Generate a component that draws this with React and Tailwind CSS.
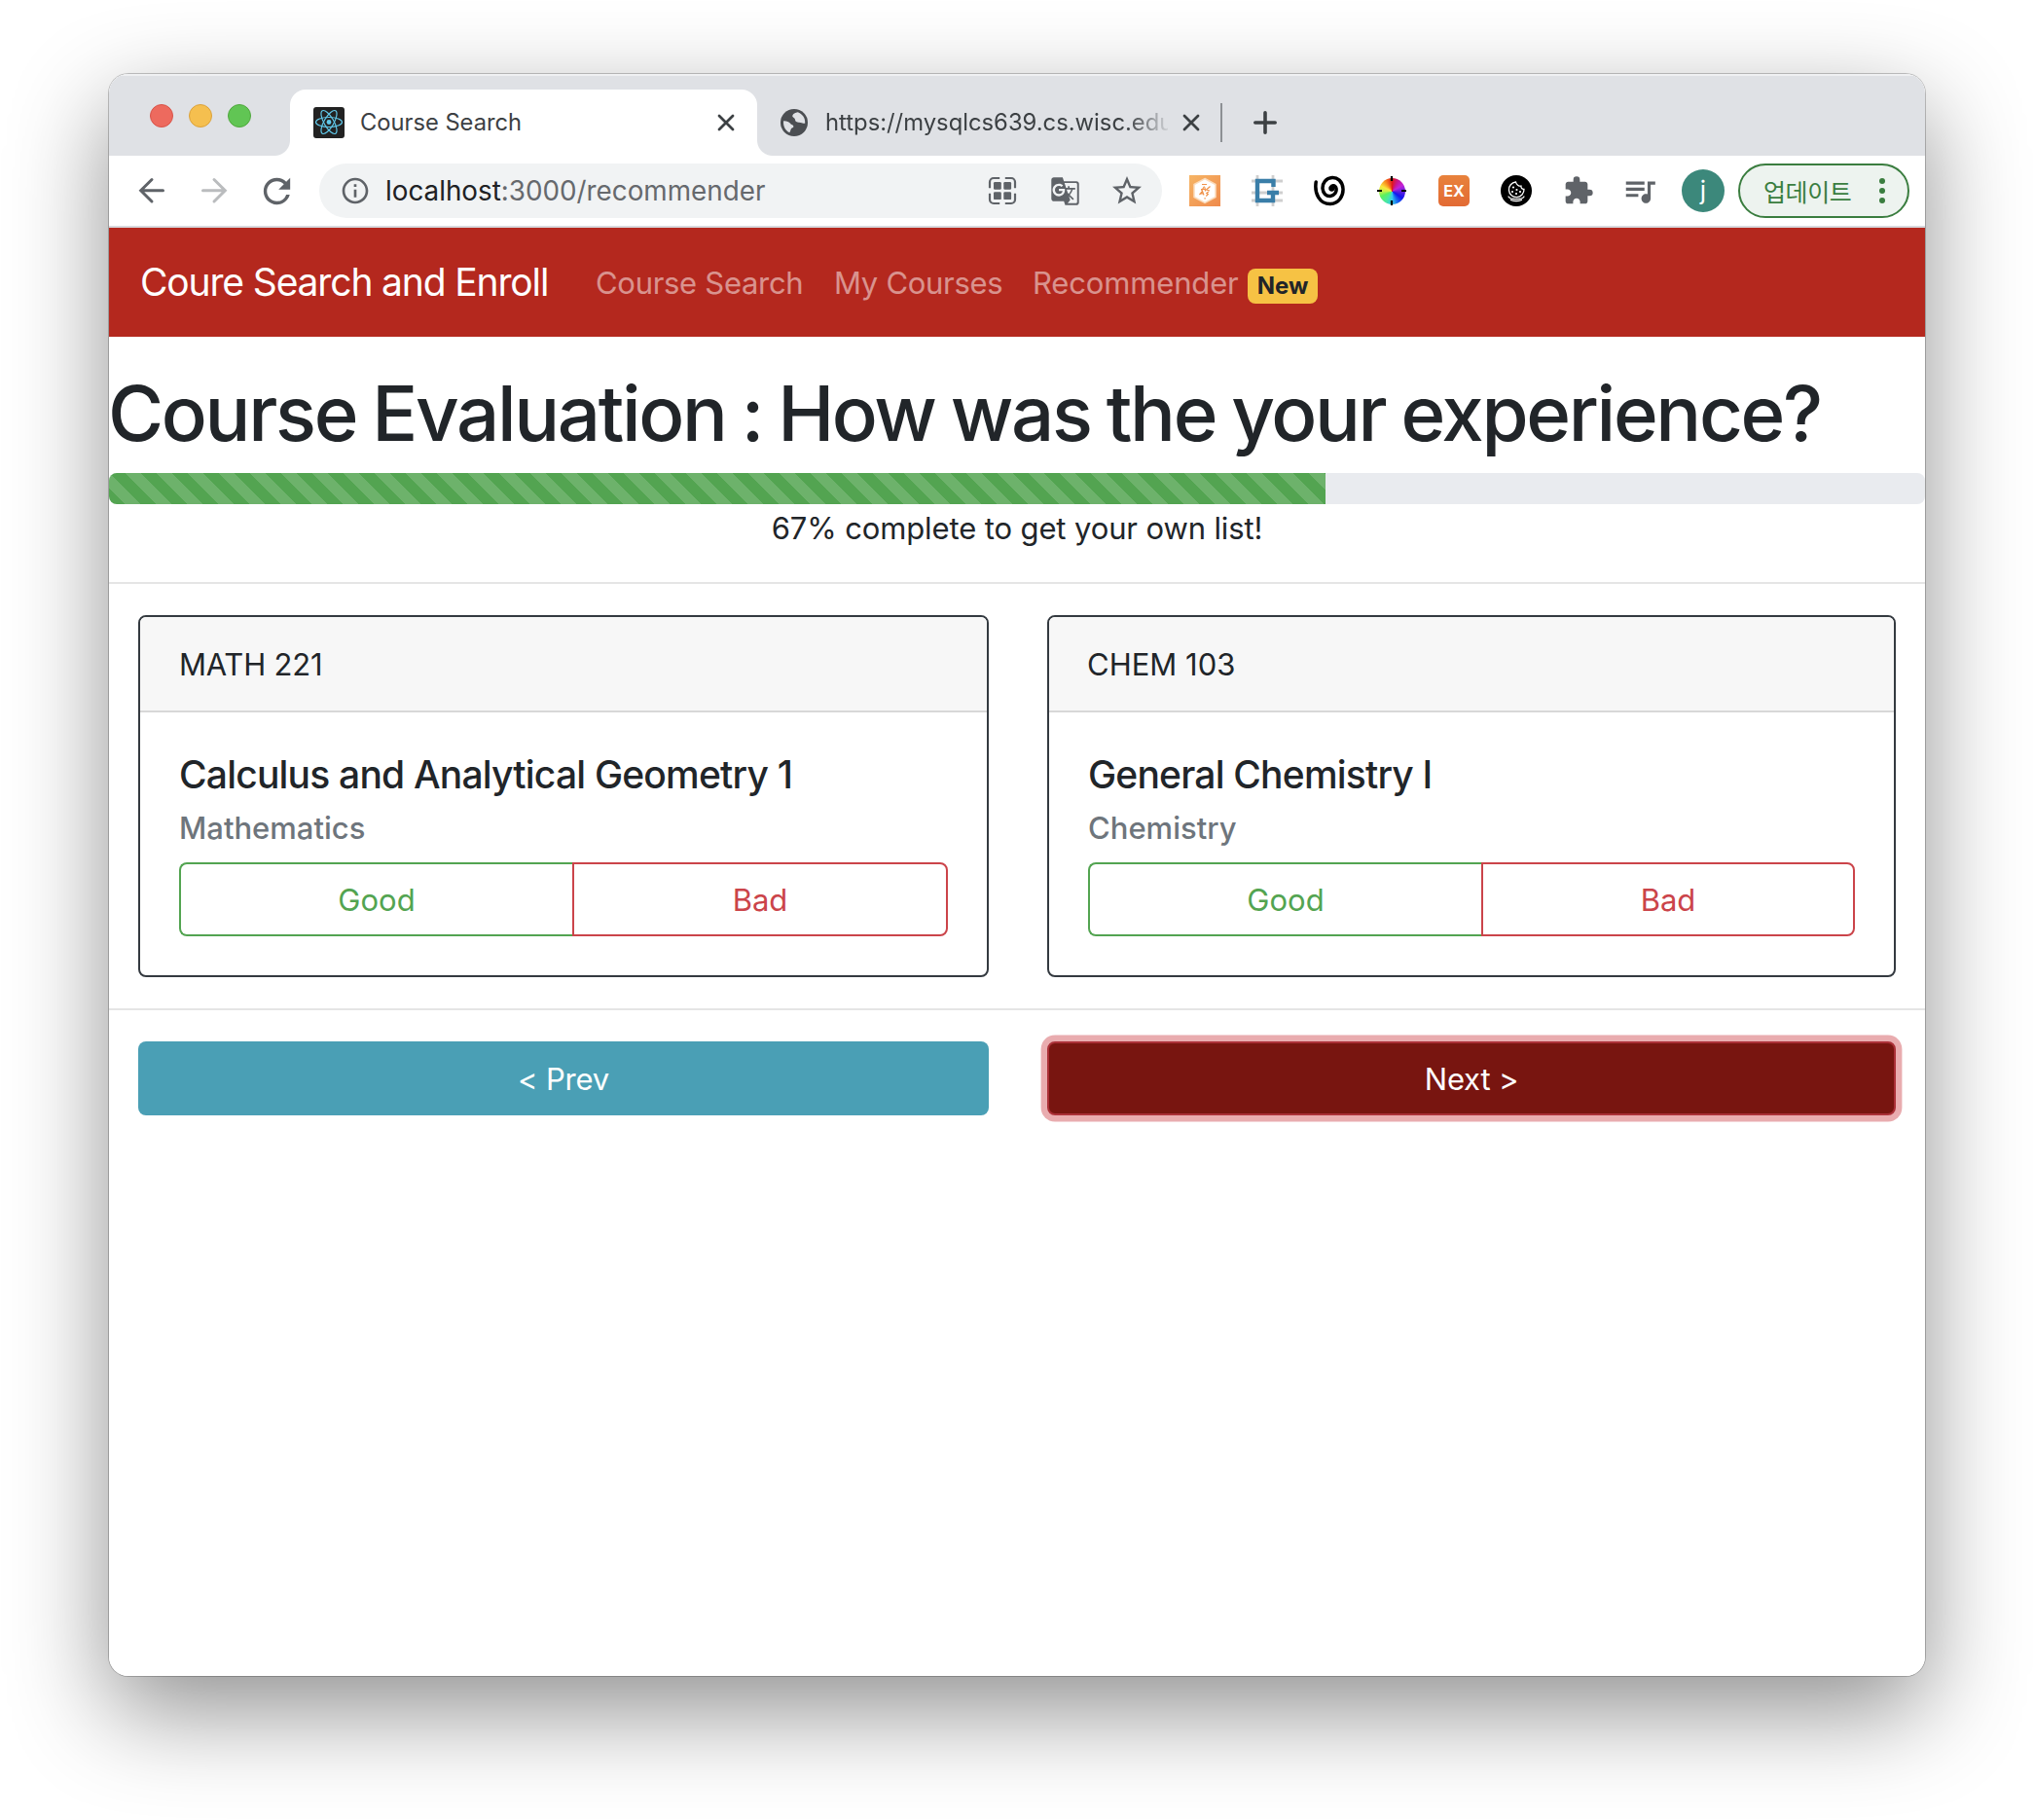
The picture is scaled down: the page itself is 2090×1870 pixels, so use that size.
import React from "react";
import {
  MdExtension,
  MdGTranslate,
  MdInfoOutline,
  MdQueueMusic,
  MdRefresh,
  MdStarBorder,
} from "react-icons/md";

const courses = [
  {
    code: "MATH 221",
    codeStyle: "pl-10 tracking-[-0.2px]",
    title: "Calculus and Analytical Geometry 1",
    subject: "Mathematics",
    box: "ml-[30px] w-[874px]",
    bad: "w-[386px]",
  },
  {
    code: "CHEM 103",
    codeStyle: "pl-[39px] tracking-normal",
    title: "General Chemistry I",
    subject: "Chemistry",
    box: "ml-[60px] w-[872px]",
    bad: "w-[384px]",
  },
];

function ReactLogo() {
  return (
    <svg className="size-8" viewBox="0 0 32 32">
      <rect width="32" height="32" rx="3" fill="#222" />
      <g fill="none" stroke="#61c9ea" strokeWidth="1.2">
        <ellipse cx="16" cy="15.5" rx="13.5" ry="5" />
        <ellipse cx="16" cy="15.5" rx="13.5" ry="5" transform="rotate(60 16 15.5)" />
        <ellipse cx="16" cy="15.5" rx="13.5" ry="5" transform="rotate(120 16 15.5)" />
      </g>
      <circle cx="16" cy="15.5" r="2.4" fill="#61c9ea" />
    </svg>
  );
}

function Globe() {
  return (
    <svg className="size-7" viewBox="0 0 28 28">
      <circle cx="14" cy="14" r="14" fill="#4b4e52" />
      <path
        d="M16.2 2.9 C12.4 4.4 11 6.2 11.4 8 C12.4 9.2 14.4 8.8 14.6 11 C14.8 13 16.8 13.2 18.6 13 C20.4 12.6 22.4 13.4 25.2 13.2 C24.9 7.8 21 3.8 16.2 2.9 Z M3 13.8 C6 13.2 8.6 13.8 10.2 15.4 C11.2 16.8 13.8 16.2 14 18.2 C13.8 19.6 11.6 19.6 11.6 21.4 C11.6 23 10.8 24 10.9 24.8 C6.2 23.5 3 19 3 13.8 Z"
        fill="#dfe1e5"
        transform="rotate(8 14 14)"
      />
    </svg>
  );
}

function CloseIcon() {
  return (
    <svg className="size-6" viewBox="0 0 24 24" stroke="#3c4043" strokeWidth="2.8" strokeLinecap="round">
      <path d="M5 5 19 19M19 5 5 19" />
    </svg>
  );
}

function QrIcon() {
  return (
    <svg className="size-10" viewBox="0 0 40 40" fill="none" stroke="#5f6368" strokeWidth="2.2">
      <path d="M17.2 7H11A4 4 0 0 0 7 11V17.2M22.8 7h6.2a4 4 0 0 1 4 4V17.2M17.2 33H11a4 4 0 0 1-4-4V22.8M22.8 33h6.2a4 4 0 0 0 4-4V22.8" />
      <g fill="#5f6368" stroke="none">
        <rect x="11" y="11" width="7.8" height="7.8" rx="1.2" />
        <rect x="21.3" y="11" width="7.8" height="7.8" rx="1.2" />
        <rect x="11" y="21.3" width="7.8" height="7.8" rx="1.2" />
        <rect x="21.3" y="21.3" width="7.8" height="7.8" rx="1.2" />
      </g>
    </svg>
  );
}

function HexExtension() {
  return (
    <svg className="size-8" viewBox="0 0 32 32">
      <defs>
        <linearGradient id="hexFill" x1="0" y1="0" x2="1" y2="1">
          <stop offset="0" stopColor="#f6b565" />
          <stop offset="1" stopColor="#ef8a4c" />
        </linearGradient>
      </defs>
      <rect width="32" height="32" fill="url(#hexFill)" />
      <path d="M16 3.5 27 9.5V22.5L16 28.5 5 22.5V9.5Z" fill="#fff" stroke="#fbdcbc" strokeWidth="1.5" />
      <path
        d="M13 9.5h5M15.5 11.5l-3 4.5M12 14.5l4.5 0M21.5 11.5l-4 3.5 3.5 1M16 12.5l.5 4M10.5 20l3-3.5 1.5 4M11.5 18.8h3M19.8 17l-2 1.5 1.5 1-2 2M15.4 23.8h1.4"
        fill="none"
        stroke="#f0924a"
        strokeWidth="1.2"
      />
    </svg>
  );
}

function GridExtension() {
  return (
    <svg className="size-8" viewBox="0 0 32 32" fill="none">
      <path d="M6 0V32M22 0V32M0 6H32M0 26H32M0 18H32" stroke="#cfcfcf" strokeWidth="2.8" />
      <path d="M22.5 12V6H6V26H22V18M16 18H28" stroke="#3a7ea8" strokeWidth="4.4" />
    </svg>
  );
}

function SpiralExtension() {
  return (
    <svg className="size-8" viewBox="0 0 32 32" fill="none" stroke="#000" strokeWidth="3.5" strokeLinecap="round">
      <path d="M2.2 7C0.4 19 6 29.8 17 29.6C26 29 30.4 21 30 14C29.5 6 24 2.2 19 2.4C12.4 2.8 8.8 8 9 13.6C9.4 19 13 21.8 17 21.4C21.6 20.8 23.6 17 23 13.6C22.2 10.4 18.6 9.6 17.6 12.4" />
      <circle cx="18.4" cy="13.6" r="1.4" fill="#000" />
    </svg>
  );
}

function WheelExtension() {
  return (
    <div className="grid size-8 place-items-center">
      <div className="relative size-[27px] rounded-full bg-[conic-gradient(#e0181c,#c81690_30deg,#c322d8_60deg,#5a1fe0_95deg,#1414ee_125deg,#1760f0_150deg,#35c8ee_180deg,#48e8a0_210deg,#5cf05c_245deg,#c8f048_270deg,#fbe63c_295deg,#f88a1e_325deg,#e0181c)]">
        <svg className="absolute -left-[2.5px] -top-[2.5px] size-8" viewBox="0 0 32 32" stroke="#000" strokeWidth="2.2">
          <path d="M16 1v5M16 26v5M1 16h5M26 16h5" />
        </svg>
      </div>
    </div>
  );
}

function CookieExtension() {
  return (
    <svg className="size-8" viewBox="0 0 32 32">
      <circle cx="16" cy="16" r="16" fill="#000" />
      <g fill="none" stroke="#fff" strokeWidth="1.3" strokeLinecap="round">
        <path d="M15.5 7A7.8 7.8 0 1 0 24 14.4C22 14.6 20.6 13 21 11.2C18.6 11.4 16 9.6 15.5 7Z" />
        <path d="M8 22C9 24 12 24.6 16 24.6S23 24 24 22M10.5 25.5C14 27 18 27 21.5 25.5" />
      </g>
      <g fill="#fff">
        <circle cx="13" cy="12.5" r="1.1" />
        <circle cx="12" cy="17" r="1.1" />
        <circle cx="16.5" cy="15" r="1.1" />
        <circle cx="16" cy="19" r="1.1" />
        <circle cx="20" cy="17" r="1.1" />
      </g>
    </svg>
  );
}

function TabStrip() {
  return (
    <div className="flex h-[84px] items-end bg-[#dfe1e5] shadow-[inset_0_2px_0_#eff0f2]">
      <div className="flex h-full items-center gap-4 pl-[42px] pt-0.5">
        <span className="size-6 rounded-full border border-[#d8544a] bg-[#ed6a5e]" />
        <span className="size-6 rounded-full border border-[#dba23c] bg-[#f5bf4f]" />
        <span className="size-6 rounded-full border border-[#51a73e] bg-[#61c554]" />
      </div>
      <div className="relative ml-10 flex h-[68px] w-[480px] items-center rounded-t-[16px] bg-white pl-6 pr-5">
        <span className="absolute -left-4 bottom-0 size-4 bg-[radial-gradient(circle_at_0_0,transparent_15.5px,white_16.5px)]" />
        <span className="absolute -right-4 bottom-0 size-4 bg-[radial-gradient(circle_at_100%_0,transparent_15.5px,white_16.5px)]" />
        <ReactLogo />
        <span className="ml-4 flex-1 text-[23.7px] leading-8 text-[#3c4043]">Course Search</span>
        <CloseIcon />
      </div>
      <div className="flex h-[68px] items-center">
        <div className="ml-6">
          <Globe />
        </div>
        <span className="ml-[18px] w-[352px] overflow-hidden whitespace-nowrap text-[23.8px] leading-8 text-[#3c4043] [mask-image:linear-gradient(to_right,black_310px,transparent_356px)]">
          https://mysqlcs639.cs.wisc.edu
        </span>
        <div className="ml-3">
          <CloseIcon />
        </div>
        <span className="ml-[18px] h-10 w-0.5 bg-[#8d9094]" />
        <svg className="ml-[30px] size-7" viewBox="0 0 28 28" stroke="#3c4043" strokeWidth="3.6" strokeLinecap="round">
          <path d="M14 3.8v20.4M3.8 14h20.4" />
        </svg>
      </div>
    </div>
  );
}

function Toolbar() {
  return (
    <div className="flex h-[74px] items-center border-b-2 border-[#d8dade] bg-white pl-6 text-[#5f6368]">
      <div className="flex gap-6">
        <svg className="size-10" viewBox="0 0 40 40" fill="none" stroke="#5f6368" strokeWidth="3" strokeLinecap="round">
          <path d="M31.5 19.8H9M20 8.5 8.7 19.8 20 31" />
        </svg>
        <svg className="size-10" viewBox="0 0 40 40" fill="none" stroke="#babcbe" strokeWidth="3" strokeLinecap="round">
          <path d="M8.5 19.8H31M20 8.5 31.3 19.8 20 31" />
        </svg>
        <MdRefresh className="size-[41px]" />
      </div>
      <div className="ml-[23px] flex h-14 w-[866px] items-center rounded-full bg-[#f1f3f4] pl-[21px] pr-4">
        <MdInfoOutline className="size-8" />
        <span className="ml-[15px] flex-1 text-[27.8px] leading-9 text-[#66696d]">
          <span className="text-[#202124]">localhost</span>:3000/recommender
        </span>
        <div className="flex items-center gap-6">
          <QrIcon />
          <div className="grid size-10 place-items-center">
            <MdGTranslate className="size-[31px]" />
          </div>
          <div className="grid size-10 place-items-center">
            <MdStarBorder className="size-9" />
          </div>
        </div>
      </div>
      <div className="ml-7 flex items-center gap-8">
        <HexExtension />
        <GridExtension />
        <SpiralExtension />
        <WheelExtension />
        <span className="grid size-8 place-items-center rounded-[5px] bg-linear-to-b from-[#e8823c] to-[#e26a34] text-[16px] leading-none font-bold text-white">
          EX
        </span>
        <CookieExtension />
        <MdExtension className="size-8" />
        <MdQueueMusic className="-mr-0.5 -ml-1 size-[38px]" />
      </div>
      <span className="ml-[26px] grid size-11 place-items-center rounded-full bg-[#3c887b] text-[26px] leading-none text-white">
        j
      </span>
      <div className="ml-[14px] flex h-14 w-44 items-center rounded-full border-2 border-[#3a7d3f] bg-[#edf3ef] pl-6">
        <span className="w-[92px] font-['Noto_Sans_CJK_KR',sans-serif] text-[25px] leading-8 tracking-[-0.4px] whitespace-nowrap text-[#3a7d3f]">
          업데이트
        </span>
        <span className="ml-[27px] flex flex-col gap-1">
          <i className="size-1.5 rounded-full bg-[#3a7d3f]" />
          <i className="size-1.5 rounded-full bg-[#3a7d3f]" />
          <i className="size-1.5 rounded-full bg-[#3a7d3f]" />
        </span>
      </div>
    </div>
  );
}

function Navbar() {
  return (
    <nav className="flex h-28 items-center bg-[#b4281e] pl-8">
      <span className="w-[420px] text-[39px] leading-[60px] tracking-[-1.15px] whitespace-nowrap text-white">
        Coure Search and Enroll
      </span>
      <div className="ml-12 flex items-center pt-px text-[31px] leading-[48px] tracking-[-0.3px] whitespace-nowrap text-white/50">
        <span className="w-[245px]">Course Search</span>
        <span className="w-[204px]">My Courses</span>
        <span className="w-[221px] tracking-[-0.15px]">Recommender</span>
        <span className="mt-[7px] grid h-9 w-[72px] place-items-center rounded-lg bg-[#f6c244] text-[24px] leading-none font-bold tracking-normal text-[#212529]">
          New
        </span>
      </div>
    </nav>
  );
}

function CourseCard({ course }) {
  return (
    <div className={"overflow-hidden rounded-lg border-2 border-[#343a40] " + course.box}>
      <div
        className={"h-[98px] border-b-2 border-[#d8d8d8] bg-[#f7f7f7] pt-6 text-[31px] leading-[49px] " + course.codeStyle}
      >
        {course.code}
      </div>
      <div className="p-10">
        <h5 className="text-[39px] leading-[48px] font-medium tracking-[-0.8px]">{course.title}</h5>
        <h6 className="mt-3 mb-4 text-[31px] leading-[38px] font-medium text-[#6e757c]">{course.subject}</h6>
        <div className="flex text-[31px] leading-[48px]">
          <button className="h-[76px] flex-1 rounded-l-lg border-2 border-r-0 border-[#53a451] pt-px text-[#53a451]">
            Good
          </button>
          <button className={"h-[76px] rounded-r-lg border-2 border-[#cb444a] pt-px text-[#cb444a] " + course.bad}>
            Bad
          </button>
        </div>
      </div>
    </div>
  );
}

export default function App() {
  return (
    <div className="h-[1870px] w-[2090px] overflow-hidden bg-white px-28 pt-[76px] font-['Inter',sans-serif] text-[#212529]">
      <div className="h-[1646px] w-[1866px] rounded-[20px] shadow-[0_0_0_1px_rgba(0,0,0,0.22),0_36px_100px_rgba(0,0,0,0.44)]">
        <div className="h-full overflow-hidden rounded-[20px] bg-white">
          <TabStrip />
          <Toolbar />
          <Navbar />
          <h1 className="mt-[31px] -ml-px text-[78px] leading-[96px] font-medium tracking-[-2.35px] whitespace-nowrap [word-spacing:-2.3px]">
            Course Evaluation : How was the your experience?
          </h1>
          <div className="mt-[13px] h-8 overflow-hidden rounded-lg bg-[#e9ebef]">
            <div className="h-full w-[67%] bg-[#53a451] bg-[linear-gradient(45deg,rgba(255,255,255,.15)_25%,transparent_25%,transparent_50%,rgba(255,255,255,.15)_50%,rgba(255,255,255,.15)_75%,transparent_75%,transparent)] bg-[length:32px_32px] bg-[position:-16px_0]" />
          </div>
          <p className="h-12 text-center text-[31px] leading-[49px] tracking-[-0.12px]">
            67% complete to get your own list!
          </p>
          <hr className="mt-8 border-t-2 border-[#e5e5e5]" />
          <div className="mt-8 flex">
            {courses.map((course) => (
              <CourseCard key={course.code} course={course} />
            ))}
          </div>
          <hr className="mt-8 border-t-2 border-[#e5e5e5]" />
          <div className="mt-8 flex text-[31px] leading-[48px] tracking-[-0.2px] text-white">
            <button className="ml-[30px] h-[76px] w-[874px] rounded-lg bg-[#4a9fb5] pt-px">&lt; Prev</button>
            <button className="ml-[60px] h-[76px] w-[872px] rounded-lg border-2 border-[#ab3037] bg-[#781510] pt-px shadow-[0_0_0_6.4px_#e9acaf]">
              Next &gt;
            </button>
          </div>
        </div>
      </div>
    </div>
  );
}
